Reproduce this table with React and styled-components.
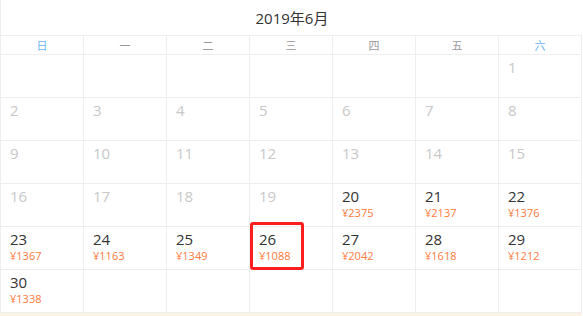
import React from "react";
import styled, { createGlobalStyle } from "styled-components";

const Global = createGlobalStyle`
  html, body { margin: 0; padding: 0; background: #fff; }
  body { font-family: "Open Sans", "Noto Sans CJK SC", sans-serif; }
`;

const Calendar = styled.div`
  width: 582px;
  box-sizing: border-box;
  border-left: 1px solid #eeeeee;
  background: #fff;
`;

const Title = styled.div`
  height: 35px;
  border-bottom: 1px solid #eeeeee;
  display: flex;
  align-items: center;
  justify-content: center;
  font-size: 15px;
  color: #333;
  padding-left: 1px;
  box-sizing: border-box;
  height: 36px;
`;

const Grid = styled.div`
  display: grid;
  grid-template-columns: repeat(7, 83px);
`;

const WeekCell = styled.div`
  height: 19px;
  border-right: 1px solid #eeeeee;
  border-bottom: 1px solid #eeeeee;
  box-sizing: border-box;
  height: 19px;
  display: flex;
  align-items: center;
  justify-content: center;
  font-size: 11px;
  font-family: "Noto Sans CJK SC", sans-serif;
  color: ${(p) => (p.$weekend ? "#6db3f2" : "#999")};
`;

const DayCell = styled.div`
  position: relative;
  height: 43px;
  box-sizing: border-box;
  border-right: 1px solid #eeeeee;
  border-bottom: 1px solid #eeeeee;
  padding: 3px 0 0 9px;
  display: flex;
  flex-direction: column;
`;

const DayNum = styled.div`
  font-size: 15px;
  line-height: 19px;
  color: ${(p) => (p.$active ? "#333" : "#c8c8c8")};
`;

const Price = styled.div`
  font-size: 11px;
  line-height: 14px;
  color: #ff7a40;
`;

const Selected = styled.div`
  position: absolute;
  left: 0;
  top: -5px;
  width: 54px;
  height: 48px;
  box-sizing: border-box;
  border: 3px solid #ff1e1e;
  border-radius: 3px;
  pointer-events: none;
`;

const Strip = styled.div`
  width: 582px;
  height: 4px;
  background: #fbf2e4;
`;

const weekdays = ["日", "一", "二", "三", "四", "五", "六"];
const prices = {
  20: 2375, 21: 2137, 22: 1376, 23: 1367, 24: 1163, 25: 1349, 26: 1088,
  27: 2042, 28: 1618, 29: 1212, 30: 1338,
};

export default function App() {
  const cells = [];
  for (let i = 0; i < 6; i++) cells.push(null);
  for (let d = 1; d <= 30; d++) cells.push(d);
  while (cells.length < 42) cells.push(null);

  return (
    <>
      <Global />
      <Calendar>
        <Title>2019年6月</Title>
        <Grid>
          {weekdays.map((w, i) => (
            <WeekCell key={w} $weekend={i === 0 || i === 6}>
              {w}
            </WeekCell>
          ))}
          {cells.map((d, i) => (
            <DayCell key={i}>
              {d && <DayNum $active={!!prices[d]}>{d}</DayNum>}
              {d && prices[d] && <Price>¥{prices[d]}</Price>}
              {d === 26 && <Selected />}
            </DayCell>
          ))}
        </Grid>
      </Calendar>
      <Strip />
    </>
  );
}
